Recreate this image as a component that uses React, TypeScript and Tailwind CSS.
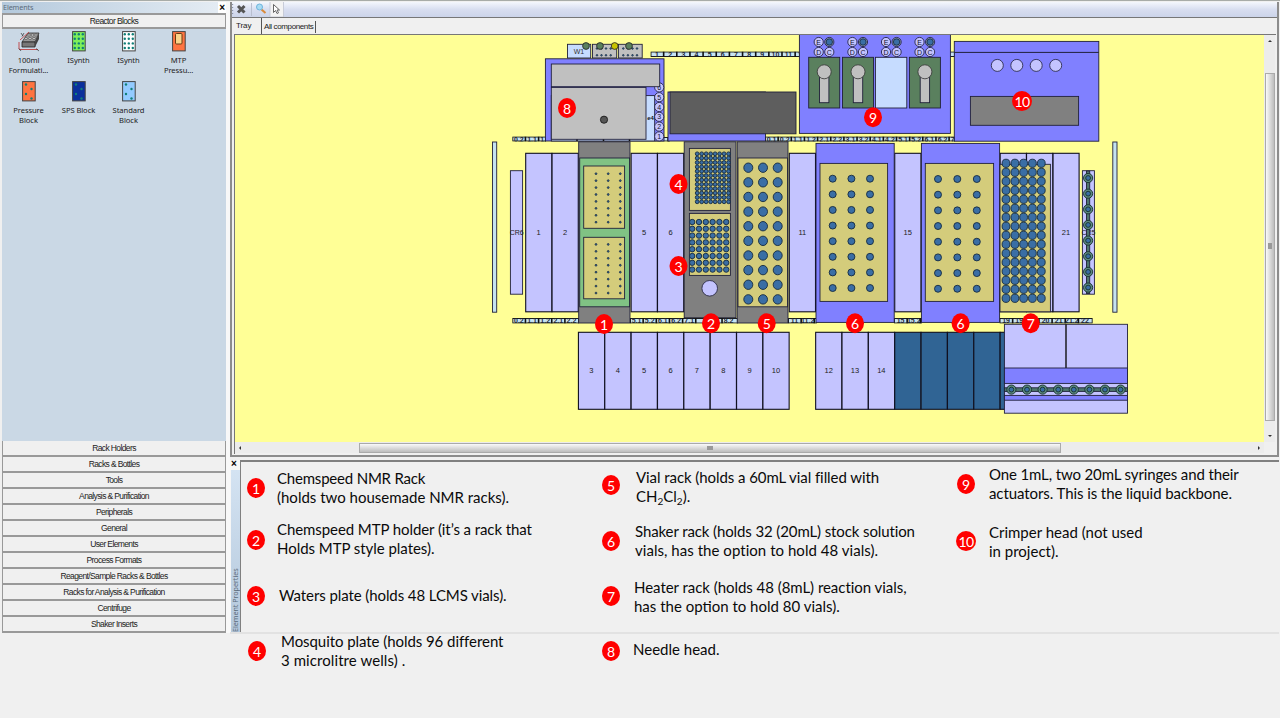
import React from "react";

const BLUE = "#3a6ea5";
const LAV = "#c4c4ff";
const PURPLE = "#8080ff";
const KHAKI = "#d4cc7b";
const SKY = "#c6dcff";
const LINE = "#20203a";

const range = (n: number) => Array.from({ length: n }, (_, i) => i);

type BoxProps = { x: number; y: number; x2: number; y2: number; fill: string };
function Box({ x, y, x2, y2, fill }: BoxProps) {
  return <rect x={x} y={y} width={x2 - x} height={y2 - y} fill={fill} stroke={LINE} strokeWidth={0.9} />;
}

type WellsProps = { xs: number[]; y: number; dy: number; rows: number; rx: number; ry?: number };
function Wells({ xs, y, dy, rows, rx, ry = rx }: WellsProps) {
  return (
    <g fill={BLUE} stroke="#152a40" strokeWidth={rx < 1.5 ? 0.8 : 0.9}>
      {range(rows).map((r) => xs.map((x) => <ellipse key={`${r}-${x}`} cx={x} cy={y + r * dy} rx={rx} ry={ry} />))}
    </g>
  );
}

function Slot({ n, lower, fill = LAV, label = true }: { n: number; lower?: boolean; fill?: string; label?: boolean }) {
  const x = 525.7 + 26.36 * (n - 1);
  const y = lower ? 332.3 : 153.3;
  const h = lower ? 77 : 158.5;
  return (
    <g>
      <rect x={x} y={y} width={26.2} height={h} fill={fill} stroke="#101020" strokeWidth={1.1} />
      {label && (
        <text x={x + 13} y={lower ? 372.6 : 234.6} fontSize={7.5} textAnchor="middle" fill="#222">
          {n}
        </text>
      )}
    </g>
  );
}

type RulerProps = { x: number; x2: number; y: number; h: number; labels: string[]; step?: number };
function Ruler({ x, x2, y, h, labels, step = 13.15 }: RulerProps) {
  return (
    <svg x={x} y={y} width={x2 - x} height={h}>
      <rect x={0.4} y={0.4} width={x2 - x - 0.8} height={h - 0.8} fill="#c8e4f4" stroke="#111" strokeWidth={1.1} />
      {labels.map((l, i) => (
        <g key={i}>
          {i > 0 && <line x1={i * step} x2={i * step} y1={0} y2={h} stroke="#111" strokeWidth={1.6} />}
          <text x={i * step + step / 2} y={h / 2 + 2.5} fontSize={7} fontWeight="bold" textAnchor="middle" fill="#1c2430">
            {l}
          </text>
        </g>
      ))}
    </svg>
  );
}

const halfLabels = (from: number, count: number) =>
  range(count).map((i) => `${Math.floor((from + i) / 2)}.${((from + i) % 2) + 1}`);

function RingVial({ x, y }: { x: number; y: number }) {
  return (
    <g stroke="#16302c" strokeWidth={0.9}>
      <circle cx={x} cy={y} r={4.6} fill="#5c8a80" />
      <circle cx={x} cy={y} r={2.4} fill={BLUE} />
    </g>
  );
}

function Port({ x, y, t, fill = LAV }: { x: number; y: number; t?: string; fill?: string }) {
  return (
    <g>
      <circle cx={x} cy={y} r={4.6} fill={fill} stroke="#26264a" strokeWidth={0.9} />
      {t && (
        <text x={x} y={y + 2.6} fontSize={7} textAnchor="middle" fill="#14142c">
          {t}
        </text>
      )}
    </g>
  );
}

function Marker({ x, y, n }: { x: number; y: number; n: number }) {
  return (
    <g>
      <ellipse cx={x} cy={y} rx={n > 9 ? 10 : 9} ry={10} fill="#ff0000" />
      <text x={x} y={y + 5.5} fontSize={14} textAnchor="middle" fill="#fff" fontFamily="Lato, sans-serif" letterSpacing={n > 9 ? -0.6 : 0}>
        {n}
      </text>
    </g>
  );
}

function Syringe({ x }: { x: number }) {
  return (
    <g>
      <Box x={x} y={57.3} x2={x + 31} y2={108} fill="#5a805e" />
      <Box x={x + 10.8} y={72} x2={x + 20.2} y2={102.7} fill="#c0c0c0" />
      <circle cx={x + 15.5} cy={71.8} r={7} fill="#c0c0c0" stroke="#333" strokeWidth={0.8} />
    </g>
  );
}

function Tray() {
  return (
    <svg
      className="block h-[407px] w-[1029px] shrink-0 bg-[#ffff96]"
      viewBox="235 35 1029 407"
      fontFamily="Liberation Sans, Arial, sans-serif"
    >
      {/* wash station and small racks */}
      <Box x={567.5} y={44.3} x2={590.7} y2={58} fill={SKY} />
      <text x={579} y={53.5} fontSize={7} textAnchor="middle" fill="#333">W1</text>
      <Box x={592.5} y={44.3} x2={616.7} y2={58} fill="#c0c0c0" />
      <Box x={618.4} y={44.3} x2={642.2} y2={58} fill="#c0c0c0" />
      <Wells xs={[597, 601.5, 606, 610.7, 623.3, 627.9, 632.5, 637]} y={48.5} dy={6.8} rows={2} rx={0.8} />
      {[586, 600, 614.7, 629].map((x) => (
        <circle key={x} cx={x} cy={46} r={3.4} fill={x === 614.7 ? "#c8c400" : "#5a805e"} stroke="#222" strokeWidth={0.8} />
      ))}

      {/* rulers */}
      <Ruler x={650.5} x2={800} y={51.5} h={5.5} labels={range(12).map((i) => `${i + 1}`)} />
      <Ruler x={949} x2={955} y={51.5} h={5.5} labels={[""]} />
      <Ruler x={512.3} x2={546} y={136.5} h={5} labels={["0.2", "1.1", "1.2"]} />
      <Ruler x={655} x2={670} y={137} h={4.5} labels={["", ""]} />
      <Ruler x={765} x2={955} y={136.5} h={5} labels={halfLabels(0, 15)} />
      <Ruler x={512.3} x2={579} y={318} h={5.5} labels={["0.2", "1.1", "1.2", "2.1", "2.2"]} />
      <Ruler x={630} x2={738} y={318} h={5.5} labels={["5.1", "5.2", "6.1", "6.2", "7.1", "", "", "8.2"]} />
      <Ruler x={788} x2={817} y={318} h={5.5} labels={["11", "11.2", ""]} />
      <Ruler x={894} x2={922} y={318} h={5.5} labels={["15", "15.2", ""]} />
      <Ruler x={999.5} x2={1092.7} y={318} h={5.5} labels={["19", "19", "", "20", "21", "21.2", "22"]} />

      {/* needle head */}
      <Box x={545.4} y={58.8} x2={664} y2={141} fill={PURPLE} />
      <Box x={551.3} y={95.6} x2={654.7} y2={141} fill={SKY} />
      <path d="M577 139V141M603.5 139V141M629.5 139V141" stroke="#111" strokeWidth={1.5} />
      {[6, 5, 4, 3, 2, 1].map((n, i) => (
        <Port key={n} x={659.2} y={87.4 + i * 9.8} t={`${n}`} />
      ))}
      <Box x={551.3} y={64} x2={659.7} y2={86.7} fill="#c0c0c0" />
      <Box x={551.3} y={87.4} x2={646} y2={139.3} fill="#c0c0c0" />
      <text x={650.5} y={120} fontSize={6} fontWeight="bold" textAnchor="middle" fill="#111">e4</text>
      <circle cx={604} cy={119.7} r={3.6} fill="#555" stroke="#111" strokeWidth={0.8} />

      <Box x={668} y={92} x2={765.5} y2={141} fill={PURPLE} />
      <Box x={670} y={92} x2={796} y2={133.8} fill="#5e5e5e" />

      {/* syringe actuators */}
      <Box x={799.4} y={34} x2={950.4} y2={133.4} fill={PURPLE} />
      {[818.7, 852.4, 886, 919.5].map((x) => (
        <g key={x}>
          <Port x={x} y={42} t="E" />
          <Port x={x} y={52} t="D" />
          <Port x={x + 10.6} y={52} t="C" />
          <Port x={x + 10.6} y={42} fill="#8a9ab4" />
          <circle cx={x + 10.6} cy={42} r={3.2} fill={BLUE} stroke="#16263a" strokeWidth={0.8} />
        </g>
      ))}
      <Syringe x={808.7} />
      <Syringe x={842.5} />
      <Box x={875.4} y={57.3} x2={906.8} y2={108} fill={SKY} />
      <Syringe x={909.4} />

      {/* crimper */}
      <Box x={954.3} y={41.4} x2={1098.8} y2={141.2} fill={PURPLE} />
      <line x1={954.3} x2={1098.8} y1={52.4} y2={52.4} stroke={LINE} />
      {[997.3, 1016.8, 1036.2, 1055.7].map((x) => (
        <circle key={x} cx={x} cy={65.4} r={6} fill={LAV} stroke={LINE} strokeWidth={0.8} />
      ))}
      <Box x={970.4} y={96.4} x2={1078.6} y2={125.3} fill="#808080" />

      {/* side rails */}
      <Box x={492.5} y={142} x2={496.7} y2={312.2} fill="#c4e2f0" />
      <Box x={1112.8} y={142} x2={1117} y2={312.2} fill="#c4e2f0" />
      <Box x={510.4} y={170.7} x2={522.6} y2={294.2} fill={LAV} />
      <text x={516.7} y={234.6} fontSize={7} textAnchor="middle" fill="#222">CR6</text>

      {/* deck slots */}
      {[1, 2, 5, 6, 11, 15, 21].map((n) => <Slot key={n} n={n} />)}
      {[19, 20].map((n) => <Slot key={n} n={n} label={false} />)}
      {[3, 4, 5, 6, 7, 8, 9, 10, 12, 13, 14].map((n) => <Slot key={n} n={n} lower />)}
      {[15, 16, 17, 18, 19].map((n) => <Slot key={n} n={n} lower fill="#306494" label={false} />)}

      {/* NMR rack */}
      <Box x={578.7} y={141.8} x2={630} y2={323} fill="#808080" />
      <Box x={579.7} y={158} x2={629.6} y2={306.8} fill="#80c284" />
      <Box x={583.7} y={166} x2={624.6} y2={228.3} fill={KHAKI} />
      <Box x={583.7} y={237.3} x2={624.6} y2={298.8} fill={KHAKI} />
      <Wells xs={[596, 608.2, 620.3]} y={173.7} dy={6.93} rows={8} rx={0.9} />
      <Wells xs={[596, 608.2, 620.3]} y={244.4} dy={6.95} rows={8} rx={0.9} />

      {/* MTP holder */}
      <Box x={684.2} y={141.8} x2={736} y2={317.7} fill="#808080" />
      <Box x={689.4} y={148.4} x2={730.4} y2={210.4} fill={KHAKI} />
      <Box x={689.4} y={213.4} x2={730.4} y2={275.4} fill={KHAKI} />
      <Wells xs={range(8).map((i) => 697.2 + i * 4.48)} y={153.8} dy={4.36} rows={12} rx={1.9} />
      <Wells xs={range(6).map((i) => 692.2 + i * 6.8)} y={222} dy={6.8} rows={8} rx={2.7} />
      <circle cx={709.7} cy={288.3} r={7.8} fill={LAV} stroke={LINE} strokeWidth={0.8} />

      {/* vial rack */}
      <Box x={737.2} y={141.8} x2={788} y2={323} fill="#808080" />
      <Box x={738} y={158} x2={787.5} y2={306.8} fill={KHAKI} />
      <Wells xs={[748.3, 763, 777.7]} y={167.7} dy={14.63} rows={10} rx={4.5} ry={4.7} />

      {/* shakers */}
      <Box x={816} y={143.4} x2={894.2} y2={322.4} fill={PURPLE} />
      <Box x={820} y={163.4} x2={887.6} y2={301.4} fill={KHAKI} />
      <Wells xs={[832.7, 851.4, 870]} y={178.7} dy={15.62} rows={8} rx={3.5} />
      <Box x={921.4} y={143.4} x2={999.6} y2={322.4} fill={PURPLE} />
      <Box x={925.3} y={163.4} x2={993.6} y2={301.4} fill={KHAKI} />
      <Wells xs={[938, 957.3, 976.8]} y={179} dy={15.68} rows={8} rx={3.5} />

      {/* heater rack */}
      <Box x={1000} y={164.3} x2={1050.4} y2={311.8} fill={KHAKI} />
      <Wells xs={[1006, 1014.9, 1023.6, 1032.4, 1041.3]} y={163.3} dy={9} rows={16} rx={3.9} ry={4.1} />

      {/* CR15 carousel */}
      <Box x={1082.4} y={170.7} x2={1094.4} y2={294.2} fill={LAV} />
      <text x={1088.4} y={234.6} fontSize={7} textAnchor="middle" fill="#222">CR5</text>
      <Box x={1086.5} y={171} x2={1089.7} y2={293.5} fill="#4f766e" />
      {range(8).map((i) => <RingVial key={i} x={1088.1} y={178 + i * 15.65} />)}

      {/* capping unit */}
      <Box x={1004.4} y={324.3} x2={1127.5} y2={413.2} fill={LAV} />
      <line x1={1066} x2={1066} y1={324.3} y2={368} stroke="#111" strokeWidth={1.4} />
      <Box x={1004.4} y={368} x2={1127.5} y2={383.4} fill={PURPLE} />
      <Box x={1004.4} y={395.4} x2={1127.5} y2={400.2} fill={PURPLE} />
      <Box x={1004.4} y={387.8} x2={1127.5} y2={391.4} fill="#4f766e" />
      {range(8).map((i) => <RingVial key={i} x={1011.4 + i * 15.6} y={389.6} />)}

      <Marker x={604} y={324} n={1} />
      <Marker x={711} y={323.3} n={2} />
      <Marker x={678.5} y={266} n={3} />
      <Marker x={678.5} y={184} n={4} />
      <Marker x={766.7} y={323.3} n={5} />
      <Marker x={855} y={323.3} n={6} />
      <Marker x={960.6} y={323.3} n={6} />
      <Marker x={1030.7} y={323.3} n={7} />
      <Marker x={567} y={108} n={8} />
      <Marker x={873} y={117.3} n={9} />
      <Marker x={1022} y={101} n={10} />
    </svg>
  );
}

function BlockIcon({ fill, dot = "#0f7f78", kind }: { fill: string; dot?: string; kind: "grid" | "zig" | "plate" }) {
  return (
    <svg width="14" height="21" viewBox="0 0 14 21">
      <rect x="0.6" y="0.6" width="12.6" height="19.3" fill={fill} stroke="#444" strokeWidth="1" />
      {kind === "grid" &&
        range(4).map((r) => range(3).map((c) => <circle key={`${r}${c}`} cx={2.8 + c * 4} cy={3.2 + r * 4.6} r="1.2" fill={dot} />))}
      {kind === "zig" &&
        [[4, 3.5], [9.5, 8], [4, 13], [9.5, 17.5]].map(([x, y]) => <circle key={y} cx={x} cy={y} r="1.2" fill={dot} />)}
      {kind === "plate" && <rect x="3.5" y="2.5" width="6.5" height="10.5" rx="1" fill="#fbd48a" stroke="#6b3a10" />}
    </svg>
  );
}

function FormulationIcon() {
  return (
    <svg width="22" height="21" viewBox="0 0 22 21">
      <path d="M4 11 10 2H21L17 11Z" fill="#999" stroke="#333" strokeWidth="0.8" />
      <path d="M4 11H17V16H4Z" fill="#777" stroke="#222" strokeWidth="0.8" />
      <path d="M17 11 21 2V8L17 16Z" fill="#444" />
      {[[11, 4], [14.5, 4], [18, 4], [8, 7.5], [12, 7.5], [16, 7.5]].map(([x, y]) => (
        <ellipse key={`${x}-${y}`} cx={x} cy={y} rx="1.4" ry="1" fill="#ddd" stroke="#333" strokeWidth="0.5" />
      ))}
      <path d="M2 9 11 1M1 11V18M1 18.5H20" stroke="#c04040" strokeWidth="0.9" fill="none" />
      <path d="M3 2 5 5M6 2 4 5.5M1 17.5 3 20M18 17.5 21 20" stroke="#333" strokeWidth="0.7" />
    </svg>
  );
}

const blocks: { label: string[]; icon: React.ReactNode }[] = [
  { label: ["100ml", "Formulati..."], icon: <FormulationIcon /> },
  { label: ["ISynth"], icon: <BlockIcon fill="#7ef05a" kind="grid" /> },
  { label: ["ISynth"], icon: <BlockIcon fill="#fff" kind="grid" /> },
  { label: ["MTP", "Pressu..."], icon: <BlockIcon fill="#ff7440" kind="plate" /> },
  { label: ["Pressure", "Block"], icon: <BlockIcon fill="#ff7440" kind="zig" /> },
  { label: ["SPS Block"], icon: <BlockIcon fill="#0a2f9c" kind="zig" /> },
  { label: ["Standard", "Block"], icon: <BlockIcon fill="#93cbff" kind="zig" /> },
];

const sections = [
  "Rack Holders", "Racks & Bottles", "Tools", "Analysis & Purification", "Peripherals", "General",
  "User Elements", "Process Formats", "Reagent/Sample Racks & Bottles", "Racks for Analysis & Purification",
  "Centrifuge", "Shaker Inserts",
];

const sectionStyle =
  "flex w-full items-center justify-center border-r border-b-2 border-l border-[#999] bg-[#f0f0f0] text-[8.5px] leading-none tracking-[-0.62px] text-[#222]";

function ElementsPanel() {
  return (
    <aside className="ml-0.5 flex h-[631px] w-[224px] shrink-0 flex-col bg-[#cad8e5]">
      <div className="flex h-[11px] items-center justify-between bg-linear-to-r from-[#b4c9dc] to-[#e6edf4] pl-px font-['Noto_Sans','Open_Sans',sans-serif] text-[7.2px] leading-none tracking-[-0.1px] text-[#5b6b7a]">
        <span>Elements</span>
        <span className="flex h-full w-[8px] items-center justify-center bg-white font-['Liberation_Sans'] text-[10px] font-bold text-black">×</span>
      </div>
      <button className={`${sectionStyle} h-[16px] shrink-0 border-t-2`}>Reactor Blocks</button>
      <div className="grid flex-1 grid-cols-[50px_50px_50px_50px] content-start pt-0.5 pl-[1.5px]">
        {blocks.map((b, i) => (
          <div key={i} className="flex h-[50px] flex-col items-center font-['Noto_Sans','Open_Sans',sans-serif] text-[7.6px] leading-[10px] tracking-[-0.08px] text-[#222]">
            {b.icon}
            <div className="mt-[3px] text-center whitespace-nowrap">
              {b.label.map((l) => <div key={l}>{l}</div>)}
            </div>
          </div>
        ))}
      </div>
      {sections.map((s) => (
        <button key={s} className={`${sectionStyle} h-[16px] shrink-0`}>{s}</button>
      ))}
    </aside>
  );
}

function Toolbar() {
  return (
    <div className="flex h-[15px] items-center bg-linear-to-b from-[#f4f7fd] via-[#d8def0] to-[#ccd4ea]">
      <svg width="60" height="15" viewBox="232 3 60 15">
        <path d="M232.6 5v1M232.6 8v1M232.6 11v1M232.6 14v1" stroke="#8a93a8" strokeWidth="1.2" />
        <path d="m238 7 6.5 6.5M244.5 7l-6.5 6.5" stroke="#555" strokeWidth="3" />
        <path d="M251.5 4v13" stroke="#b9bfd0" />
        <rect x="270" y="2.5" width="13.5" height="15.5" fill="#f3f3f3" stroke="#c8ccd8" />
        <path d="m261.5 10.5 4 3.5" stroke="#d98a3a" strokeWidth="2" />
        <circle cx="259.5" cy="8" r="3" fill="#a8dcf4" stroke="#6fb4dc" />
        <path d="M273.5 5.5v8l2-2 1.5 3 1.5-.7-1.5-2.8h2.5z" fill="#fff" stroke="#555" strokeWidth="0.9" />
      </svg>
    </div>
  );
}

function TrayPanel() {
  return (
    <div className="flex h-[455px] w-[1049px] flex-col border-r-2 border-b-2 border-l-2 border-[#8c8c8c] bg-[#f0f0f0]">
      <Toolbar />
      <div className="flex h-[17px] shrink-0 border-t border-[#777] pl-1 text-[8px] leading-[15px] tracking-[-0.1px] text-[#222]">
        <span className="w-[26px] border-r border-[#555]">Tray</span>
        <span className="mt-[3px] h-[12px] w-[54px] border-r border-[#555] pl-0.5 leading-[12px] tracking-[-0.38px] whitespace-nowrap">All components</span>
      </div>
      <div className="ml-0.5 flex h-[420px] w-[1042px] shrink-0 flex-col border-t border-l border-[#777]">
        <div className="flex h-[407px]">
          <Tray />
          <div className="flex w-[11px] flex-col items-center bg-[#ececec]">
            <span className="mt-[5px] border-x-2 border-b-2 border-transparent border-b-[#333]" />
            <div className="mt-[31px] flex h-[348px] w-[10px] items-center justify-center border border-[#aaa] bg-linear-to-r from-[#fafafa] to-[#bdbdbd]">
              <span className="mb-0.5 h-1.5 w-1 bg-[#999]" />
            </div>
            <span className="mt-[14px] border-x-2 border-t-2 border-transparent border-t-[#333]" />
          </div>
        </div>
        <div className="flex h-[11px] w-[1029px] items-center bg-[#ececec]">
          <span className="ml-1 border-y-2 border-r-2 border-transparent border-r-[#333]" />
          <div className="ml-[118px] flex h-[10px] w-[702px] items-center justify-center border border-[#aaa] bg-linear-to-b from-[#fafafa] to-[#bdbdbd]">
            <span className="h-1 w-1.5 bg-[#999]" />
          </div>
          <span className="ml-[197px] border-y-2 border-l-2 border-transparent border-l-[#333]" />
        </div>
      </div>
    </div>
  );
}

function Badge({ n }: { n: number }) {
  return (
    <span className={`flex h-5 shrink-0 items-center justify-center rounded-[50%] bg-[#ff0000] pt-px font-['Lato',sans-serif] text-[14px] leading-none text-white ${n > 9 ? "-mx-px w-5 tracking-[-0.6px]" : "w-[18px]"}`}>
      {n}
    </span>
  );
}

type Line = { text: React.ReactNode; track?: string };
type Entry = { n: number; lines: Line[]; box: string; badge: string; text: string };
const sub = <sub className="text-[10px] leading-none">2</sub>;

const legend: { col: string; entries: Entry[] }[] = [
  {
    col: "ml-[17px] w-[355px]",
    entries: [
      { n: 1, box: "h-[52px]", badge: "pt-[10px]", text: "pl-3 pt-px", lines: [{ text: "Chemspeed NMR Rack", track: "tracking-[-0.2px]" }, { text: "(holds two housemade NMR racks)." }] },
      { n: 2, box: "h-[56px]", badge: "pt-[10px]", text: "pl-3", lines: [{ text: "Chemspeed MTP holder (it’s a rack that", track: "tracking-[-0.08px]" }, { text: "Holds MTP style plates).", track: "tracking-[-0.04px]" }] },
      { n: 3, box: "h-[56px]", badge: "pt-[10px]", text: "pl-[14px] pt-[10px]", lines: [{ text: "Waters plate (holds 48 LCMS vials).", track: "tracking-[-0.09px]" }] },
      { n: 4, box: "h-[56px]", badge: "pt-[9px] pl-px", text: "pl-[15px]", lines: [{ text: "Mosquito plate (holds 96 different", track: "tracking-[-0.06px]" }, { text: "3 microlitre wells) .", track: "tracking-[0.08px]" }] },
    ],
  },
  {
    col: "w-[355px]",
    entries: [
      { n: 5, box: "h-[52px]", badge: "pt-[7px]", text: "pl-[16px]", lines: [{ text: "Vial rack (holds a 60mL vial filled with", track: "tracking-[-0.07px]" }, { text: <>CH{sub}Cl{sub}).</> }] },
      { n: 6, box: "h-[56px]", badge: "pt-[11px]", text: "pl-[15px] pt-[2px]", lines: [{ text: "Shaker rack (holds 32 (20mL) stock solution", track: "tracking-[-0.11px]" }, { text: "vials, has the option to hold 48 vials).", track: "tracking-[0.04px]" }] },
      { n: 7, box: "h-[56px]", badge: "pt-[10px]", text: "pl-[14px] pt-[2px]", lines: [{ text: "Heater rack (holds 48 (8mL) reaction vials,", track: "tracking-[-0.04px]" }, { text: "has the option to hold 80 vials)." }] },
      { n: 8, box: "h-[56px]", badge: "pt-[9px]", text: "pl-[13px] pt-[8px]", lines: [{ text: "Needle head." }] },
    ],
  },
  {
    col: "",
    entries: [
      { n: 9, box: "h-[52px]", badge: "pt-[6px]", text: "pl-[14px] -mt-[3px]", lines: [{ text: "One 1mL, two 20mL syringes and their", track: "tracking-[-0.13px]" }, { text: "actuators. This is the liquid backbone.", track: "tracking-[-0.08px]" }] },
      { n: 10, box: "h-[56px]", badge: "pt-[11px]", text: "pl-[14px] pt-[3px]", lines: [{ text: "Crimper head (not used" }, { text: "in project)." }] },
    ],
  },
];

function BottomArea() {
  return (
    <div className="grid">
      <div className="col-start-1 row-start-1 flex h-[174px] w-[1049px] border-b-2 border-[#e2e2e2] bg-[#f0f0f0]">
        <div className="flex w-[10px] flex-col items-center bg-[#f6f6f6]">
          <span className="h-[10px] -translate-x-px text-[10px] leading-[8px] font-bold">×</span>
          <div className="flex w-[9px] flex-1 rotate-180 items-center justify-start bg-linear-to-t from-[#d4e3f2] to-[#b4c8dc] font-['Noto_Sans','Open_Sans',sans-serif] text-[7.2px] leading-[9px] tracking-[-0.05px] whitespace-nowrap text-[#5b6b7a] [writing-mode:vertical-rl]">
            Element Properties
          </div>
        </div>
        <div className="flex-1 border-t-2 border-l border-[#808080] bg-[#f0f0f0]" />
      </div>
      <div className="z-10 col-start-1 row-start-1 flex pt-[8px]">
        {legend.map((c, ci) => (
          <div key={ci} className={c.col}>
            {c.entries.map((e) => (
              <div key={e.n} className={`flex items-start ${e.box}`}>
                <div className={e.badge}><Badge n={e.n} /></div>
                <div className={`font-['Lato',sans-serif] text-[15px] leading-[18px] whitespace-nowrap text-[#0a0a0a] ${e.text}`}>
                  {e.lines.map((l, i) => <div key={i} className={`h-[19px] ${l.track ?? ""}`}>{l.text}</div>)}
                </div>
              </div>
            ))}
          </div>
        ))}
      </div>
    </div>
  );
}

export default function App() {
  return (
    <div className="flex h-[720px] w-[1280px] flex-col overflow-hidden border-b-2 border-white bg-[#f0f0f0] font-['Liberation_Sans',Arial,sans-serif]">
      <div className="mb-px h-px shrink-0 bg-[#a8aca8]" />
      <div className="flex items-start">
        <ElementsPanel />
        <div className="h-[631px] w-[4px] shrink-0 bg-[#f8f8f8]" />
        <div className="flex flex-col gap-[3px]">
          <TrayPanel />
          <BottomArea />
        </div>
      </div>
    </div>
  );
}
